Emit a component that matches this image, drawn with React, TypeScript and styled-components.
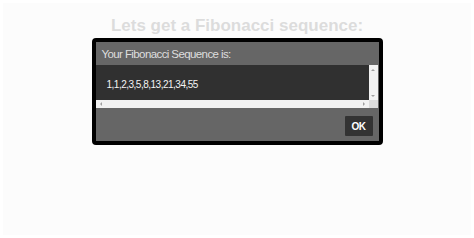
import styled, { createGlobalStyle } from 'styled-components';

const sequence = [1, 1, 2, 3, 5, 8, 13, 21, 34, 55];

const GlobalStyle = createGlobalStyle`
    html, body {
        margin: 0;
        background: #ffffff;
    }
`;

export default function App() {
    return (
        <>
            <GlobalStyle />
            <Page>
                <Title>Lets get a Fibonacci sequence:</Title>
                <Dialog>
                    <Header>Your Fibonacci Sequence is:</Header>
                    <Output>
                        <Content>{sequence.join(',')}</Content>
                        <VScroll>
                            <Arrow dir="up" />
                            <Arrow dir="down" />
                        </VScroll>
                        <HScroll>
                            <Arrow dir="left" />
                            <Arrow dir="right" />
                        </HScroll>
                        <Corner />
                    </Output>
                    <Footer>
                        <OkButton>OK</OkButton>
                    </Footer>
                </Dialog>
            </Page>
        </>
    );
}

/* Styles */
const Page = styled.div`
    box-sizing: border-box;
    margin: 3px;
    height: 232px;
    padding-top: 13px;
    background: #fcfcfc;
`;
const Title = styled.h1`
    margin: 0;
    text-align: center;
    font: bold 17px/20px 'Liberation Sans', Arial, sans-serif;
    color: #dcdcdc;
`;
const Dialog = styled.div`
    box-sizing: border-box;
    width: 291px;
    margin: 2px auto 0;
    border: 4px solid #000;
    border-radius: 4px;
    background: #666;
    display: flex;
    flex-direction: column;
`;
const Header = styled.div`
    height: 23px;
    padding-left: 6px;
    display: flex;
    align-items: center;
    font: 11.5px 'Liberation Sans', Arial, sans-serif;
    letter-spacing: -0.6px;
    color: #dedede;
`;
const Output = styled.div`
    display: grid;
    grid-template-columns: 1fr 9px;
    grid-template-rows: 35px 8px;
    margin-right: 1px;
`;
const Content = styled.div`
    background: #303030;
    padding-left: 11px;
    display: flex;
    align-items: center;
    padding-top: 3px;
    font: 10px 'Liberation Sans', Arial, sans-serif;
    letter-spacing: -0.5px;
    color: #f4f4f4;
`;
const VScroll = styled.div`
    background: #f2f2f2;
    display: flex;
    flex-direction: column;
    justify-content: space-between;
    align-items: center;
    padding: 4px 0 3px;
`;
const HScroll = styled.div`
    background: #f2f2f2;
    display: flex;
    justify-content: space-between;
    align-items: center;
    padding: 0 4px;
`;
const Corner = styled.div`
    background: #dcdcdc;
`;
const Arrow = styled.span<{ dir: 'up' | 'down' | 'left' | 'right' }>`
    width: 0;
    height: 0;
    border: 2px solid transparent;
    ${({ dir }) =>
        dir === 'up'
            ? 'border-bottom-color: #a0a0a0; border-top-width: 0;'
            : dir === 'down'
            ? 'border-top-color: #a0a0a0; border-bottom-width: 0;'
            : dir === 'left'
            ? 'border-right-color: #a0a0a0; border-left-width: 0;'
            : 'border-left-color: #a0a0a0; border-right-width: 0;'}
`;
const Footer = styled.div`
    height: 33px;
    display: flex;
    justify-content: flex-end;
    align-items: flex-start;
    padding: 8px 6px 0 0;
    box-sizing: border-box;
`;
const OkButton = styled.button`
    width: 28px;
    height: 20px;
    padding: 0;
    border: none;
    border-radius: 1px;
    background: #333;
    color: #fff;
    font: bold 10px 'Liberation Sans', Arial, sans-serif;
    letter-spacing: -0.4px;
`;
